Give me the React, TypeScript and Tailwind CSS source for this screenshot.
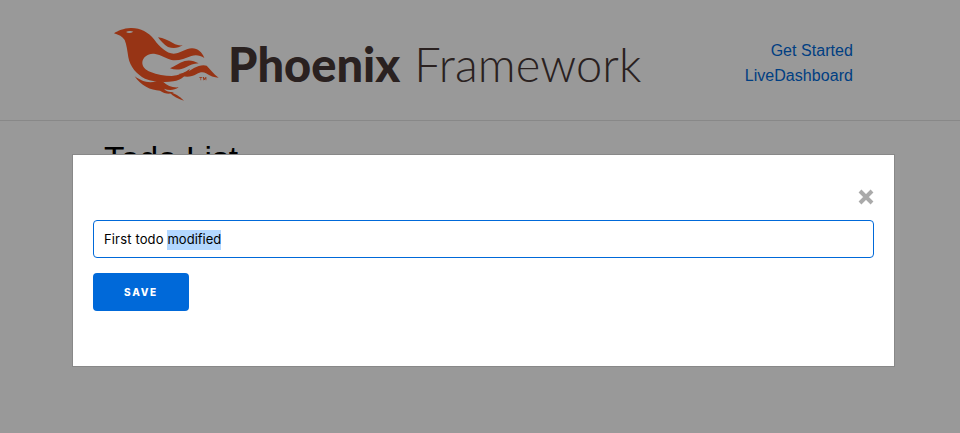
const Logo = () => (
  <div className="flex items-center">
    <svg viewBox="0 0 336 240" className="h-[80px] w-[112px] shrink-0">
      <g fill="#fc5823">
        {/* head and body */}
        <path d="M12 28 C24 20 40 13 62 12 C90 11 115 24 132 46 C142 60 150 68 160 76 C172 86 186 92 200 88 C215 84 228 74 245 73 C262 72 276 84 283 102 C270 94 258 92 244 96 C224 104 204 112 184 108 C168 104 152 92 136 90 C116 86 100 98 97 114 C96 128 106 138 122 144 C140 152 165 156 185 156 C205 154 225 146 240 134 C232 152 214 168 190 172 C165 176 130 174 105 164 C80 152 60 128 55 100 C52 80 50 62 44 48 C38 38 26 32 12 28 Z" />
        {/* top feather */}
        <path d="M144 40 C160 42 176 50 190 58 C198 63 208 65 218 64 C206 72 190 74 174 69 C162 63 152 50 144 40 Z" />
        {/* middle feathers */}
        <path d="M180 133 C195 127 208 116 224 111 C238 107 252 110 266 118 C250 119 240 123 228 130 C212 138 195 139 180 133 Z" />
        <path d="M206 150 C222 149 238 141 252 132 C264 125 280 121 290 125 C300 134 310 150 326 161 C312 161 300 156 288 148 C280 143 270 144 260 150 C242 160 222 161 206 150 Z" />
        {/* lower wing */}
        <path d="M74 157 C92 170 115 180 138 172 C146 168 154 168 160 174 C172 186 188 192 206 190 C192 200 176 200 162 194 C168 202 178 204 192 205 C180 212 164 210 150 200 C122 200 92 184 74 157 Z" />
        <path d="M178 205 C194 208 208 216 222 230 C205 226 190 218 178 205 Z" />
        {/* trademark */}
        <path d="M268 159 h9 v2 h-3.500 v8 h-2 v-8 h-3.500 Z M279 159 h2.500 l2.500 5 l2.500 -5 h2.500 v10 h-2 v-6 l-2.300 5 h-1.400 l-2.300 -5 v6 h-2 Z" />
      </g>
      <path d="M48 24 C54 21 62 20 70 23 C62 28 54 28 48 24 Z" fill="#ffffff" />
    </svg>
    <div className="ml-[6px] flex items-baseline font-['Lato',sans-serif] text-[47px] leading-none text-[#463736]">
      <span className="font-black">Phoenix</span>
      <span className="ml-[14px] font-light tracking-[0.1px]">Framework</span>
    </div>
  </div>
);

const App = () => {
  return (
    <div className="relative h-[433px] w-[960px] overflow-hidden bg-white font-['Liberation_Sans',Arial,sans-serif]">
      <header className="flex h-[121px] items-start justify-between border-b border-[#e3e3e3] pl-[110px] pr-[107px] pt-[24px]">
        <Logo />
        <nav className="flex flex-col items-end pt-[14px] text-[16px] leading-[25px] tracking-[0.05px] text-[#0069d9]">
          <a>Get Started</a>
          <a>LiveDashboard</a>
        </nav>
      </header>
      <main className="px-[104px] pt-[16px]">
        <h2 className="text-[33.5px] leading-[44px] text-black">Todo List</h2>
      </main>

      {/* overlay and modal */}
      <div className="absolute inset-0 bg-black/40 pl-[72px] pt-[154px]">
        <div className="h-[213px] w-[823px] border border-[#888888] bg-white px-[20px] pt-[20px]">
          <div className="flex h-[45px] justify-end">
            <svg viewBox="0 0 16 16" className="mt-[14px] h-[16px] w-[16px]">
              <path d="M2 2 L14 14 M14 2 L2 14" stroke="#aaaaaa" strokeWidth="4" />
            </svg>
          </div>
          <div className="flex h-[38px] w-[781px] items-center rounded-[4px] border border-[#0069d9] pl-[10px] pt-[2px] font-['Inter',sans-serif] text-[13px] tracking-[0.15px] text-black">
            First todo&nbsp;<span className="bg-[#b3d7ff] tracking-[0px]">modified</span>
          </div>
          <button className="mt-[15px] h-[38px] w-[96px] rounded-[4px] bg-[#0069d9] font-['Inter',sans-serif] text-[10px] font-extrabold tracking-[1.7px] text-white">
            SAVE
          </button>
        </div>
      </div>
    </div>
  );
};

export default App;
